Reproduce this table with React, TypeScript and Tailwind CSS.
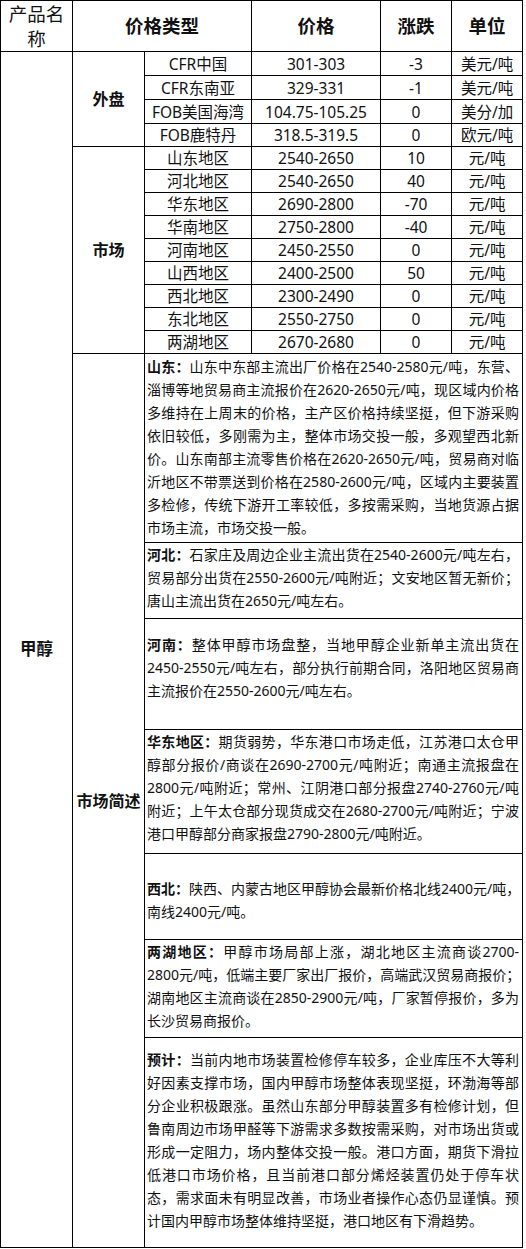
import React from "react";

type PriceRow = {
  name: string;
  price: string;
  change: string;
  unit: string;
  h: string;
};

type Note = {
  label: string;
  lines: string[];
  h: string;
  pt: string;
};

const outerRows: PriceRow[] = [
  { name: "CFR中国", price: "301-303", change: "-3", unit: "美元/吨", h: "h-[24px]" },
  { name: "CFR东南亚", price: "329-331", change: "-1", unit: "美元/吨", h: "h-[24px]" },
  { name: "FOB美国海湾", price: "104.75-105.25", change: "0", unit: "美分/加", h: "h-[24px]" },
  { name: "FOB鹿特丹", price: "318.5-319.5", change: "0", unit: "欧元/吨", h: "h-[23px]" },
];

const marketRows: PriceRow[] = [
  { name: "山东地区", price: "2540-2650", change: "10", unit: "元/吨", h: "h-[23px]" },
  { name: "河北地区", price: "2540-2650", change: "40", unit: "元/吨", h: "h-[23px]" },
  { name: "华东地区", price: "2690-2800", change: "-70", unit: "元/吨", h: "h-[22px]" },
  { name: "华南地区", price: "2750-2800", change: "-40", unit: "元/吨", h: "h-[23px]" },
  { name: "河南地区", price: "2450-2550", change: "0", unit: "元/吨", h: "h-[23px]" },
  { name: "山西地区", price: "2400-2500", change: "50", unit: "元/吨", h: "h-[23px]" },
  { name: "西北地区", price: "2300-2490", change: "0", unit: "元/吨", h: "h-[23px]" },
  { name: "东北地区", price: "2550-2750", change: "0", unit: "元/吨", h: "h-[23px]" },
  { name: "两湖地区", price: "2670-2680", change: "0", unit: "元/吨", h: "h-[22px]" },
];

const notes: Note[] = [
  {
    label: "山东：",
    h: "h-[189px]",
    pt: "pt-[1px]",
    lines: [
      "山东中东部主流出厂价格在2540-2580元/吨，东营、",
      "淄博等地贸易商主流报价在2620-2650元/吨，现区域内价格",
      "多维持在上周末的价格，主产区价格持续坚挺，但下游采购",
      "依旧较低，多刚需为主，整体市场交投一般，多观望西北新",
      "价。山东南部主流零售价格在2620-2650元/吨，贸易商对临",
      "沂地区不带票送到价格在2580-2600元/吨，区域内主要装置",
      "多检修，传统下游开工率较低，多按需采购，当地货源占据",
      "市场主流，市场交投一般。",
    ],
  },
  {
    label: "河北：",
    h: "h-[76px]",
    pt: "pt-0",
    lines: [
      "石家庄及周边企业主流出货在2540-2600元/吨左右，",
      "贸易部分出货在2550-2600元/吨附近；文安地区暂无新价；",
      "唐山主流出货在2650元/吨左右。",
    ],
  },
  {
    label: "河南：",
    h: "h-[111px]",
    pt: "pt-[14px]",
    lines: [
      "整体甲醇市场盘整，当地甲醇企业新单主流出货在",
      "2450-2550元/吨左右，部分执行前期合同，洛阳地区贸易商",
      "主流报价在2550-2600元/吨左右。",
    ],
  },
  {
    label: "华东地区：",
    h: "h-[124px]",
    pt: "pt-0",
    lines: [
      "期货弱势，华东港口市场走低，江苏港口太仓甲",
      "醇部分报价/商谈在2690-2700元/吨附近；南通主流报盘在",
      "2800元/吨附近；常州、江阴港口部分报盘2740-2760元/吨",
      "附近；上午太仓部分现货成交在2680-2700元/吨附近；宁波",
      "港口甲醇部分商家报盘2790-2800元/吨附近。",
    ],
  },
  {
    label: "西北：",
    h: "h-[86px]",
    pt: "pt-[23px]",
    lines: ["陕西、内蒙古地区甲醇协会最新价格北线2400元/吨，", "南线2400元/吨。"],
  },
  {
    label: "两湖地区：",
    h: "h-[98px]",
    pt: "pt-0",
    lines: [
      "甲醇市场局部上涨，湖北地区主流商谈2700-",
      "2800元/吨，低端主要厂家出厂报价，高端武汉贸易商报价；",
      "湖南地区主流商谈在2850-2900元/吨，厂家暂停报价，多为",
      "长沙贸易商报价。",
    ],
  },
  {
    label: "预计：",
    h: "h-[210px]",
    pt: "pt-[10px]",
    lines: [
      "当前内地市场装置检修停车较多，企业库压不大等利",
      "好因素支撑市场，国内甲醇市场整体表现坚挺，环渤海等部",
      "分企业积极跟涨。虽然山东部分甲醇装置多有检修计划，但",
      "鲁南周边市场甲醛等下游需求多数按需采购，对市场出货或",
      "形成一定阻力，场内整体交投一般。港口方面，期货下滑拉",
      "低港口市场价格，且当前港口部分烯烃装置仍处于停车状",
      "态，需求面未有明显改善，市场业者操作心态仍显谨慎。预",
      "计国内甲醇市场整体维持坚挺，港口地区有下滑趋势。",
    ],
  },
];

const cell = "border border-black text-center align-middle p-0 text-[15.5px] leading-[22px]";
const head = "border border-black text-center align-middle font-bold text-[18.5px]";

const NoteCell = ({ note }: { note: Note }) => {
  return (
    <td colSpan={4} className={`border border-black align-top pl-[2px] pr-[3px] pb-0 ${note.pt} text-[14px] leading-[23px]`}>
      {note.lines.map((line, index) => {
        const last = index === note.lines.length - 1;
        return (
          <div
            key={index}
            className={`whitespace-nowrap ${last ? "text-left" : "text-justify [text-align-last:justify]"}`}
          >
            {index === 0 && <span className="font-bold">{note.label}</span>}
            {line}
          </div>
        );
      })}
    </td>
  );
};

export default function App() {
  return (
    <div className="bg-white w-[526px] min-h-[1249px] text-[#111] font-['Noto_Sans','Noto_Sans_CJK_SC',sans-serif]">
      <table className="border-collapse table-fixed w-[523px]">
        <colgroup>
          <col className="w-[72px]" />
          <col className="w-[72px]" />
          <col className="w-[107px]" />
          <col className="w-[129px]" />
          <col className="w-[71px]" />
          <col className="w-[71px]" />
        </colgroup>
        <tbody>
          <tr className="h-[50px]">
            <td className="border border-black text-center align-middle font-normal text-[18.5px] leading-[25px] px-[1px]">
              产品名称
            </td>
            <td colSpan={2} className={head}>
              价格类型
            </td>
            <td className={head}>价格</td>
            <td className={head}>涨跌</td>
            <td className={head}>单位</td>
          </tr>
          {outerRows.map((row, index) => (
            <tr key={row.name} className={row.h}>
              {index === 0 && (
                <td rowSpan={20} className="border border-black text-center align-middle font-bold text-[16.5px]">
                  甲醇
                </td>
              )}
              {index === 0 && (
                <td rowSpan={4} className="border border-black text-center align-middle font-bold text-[16px]">
                  外盘
                </td>
              )}
              <td className={cell}>{row.name}</td>
              <td className={cell}>{row.price}</td>
              <td className={cell}>{row.change}</td>
              <td className={cell}>{row.unit}</td>
            </tr>
          ))}
          {marketRows.map((row, index) => (
            <tr key={row.name} className={row.h}>
              {index === 0 && (
                <td rowSpan={9} className="border border-black text-center align-middle font-bold text-[16px]">
                  市场
                </td>
              )}
              <td className={cell}>{row.name}</td>
              <td className={cell}>{row.price}</td>
              <td className={cell}>{row.change}</td>
              <td className={cell}>{row.unit}</td>
            </tr>
          ))}
          {notes.map((note, index) => (
            <tr key={note.label} className={note.h}>
              {index === 0 && (
                <td rowSpan={7} className="border border-black text-center align-middle font-bold text-[16px]">
                  市场简述
                </td>
              )}
              <NoteCell note={note} />
            </tr>
          ))}
        </tbody>
      </table>
    </div>
  );
}
